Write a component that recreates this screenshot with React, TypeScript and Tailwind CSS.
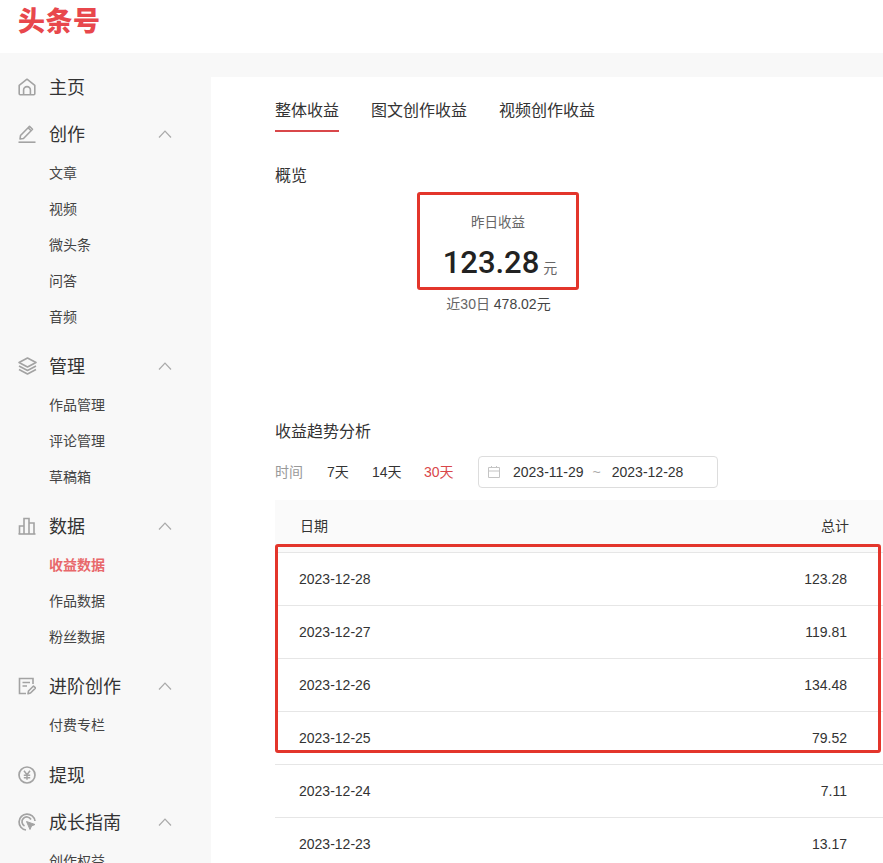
import React from "react";

const cjk = { fontFamily: '"Liberation Sans", "Noto Sans CJK SC", sans-serif' };

const HomeI = () => (
  <svg width="18" height="18" viewBox="0 0 18 18" fill="none" stroke="#a3a3a3" strokeWidth="1.6">
    <path d="M1.2 7.4 9 1.2l7.800 6.200v8.400a1 1 0 0 1-1 1H2.200a1 1 0 0 1-1-1z" strokeLinejoin="round" />
    <path d="M5.600 16.600v-4.600a3.400 3.400 0 0 1 6.800 0v4.600" />
  </svg>
);
const PenI = () => (
  <svg width="18" height="18" viewBox="0 0 18 18" fill="none" stroke="#a3a3a3" strokeWidth="1.6">
    <path d="M2.500 10.500 2 14l3.500-.5 7.600-7.800-3-3zM10.100 2.700 11.500 1.300l3 3-1.400 1.400" strokeLinejoin="round" />
    <path d="M0.500 17.200h17" />
  </svg>
);
const LayersI = () => (
  <svg width="19" height="18" viewBox="0 0 19 18" fill="none" stroke="#a3a3a3" strokeWidth="1.6" strokeLinejoin="round">
    <path d="M9.500 1 18 5.500 9.500 10 1 5.500z" />
    <path d="M1 9l8.500 4.500L18 9" />
    <path d="M1 12.500 9.500 17l8.500-4.500" />
  </svg>
);
const BarsI = () => (
  <svg width="18" height="18" viewBox="0 0 18 18" fill="none" stroke="#a3a3a3" strokeWidth="1.6">
    <path d="M0.500 17h17" />
    <path d="M1.500 17V9h4.500v8M6 17V1.500h5V17M11 17V6h5v11" />
  </svg>
);
const NoteI = () => (
  <svg width="18" height="18" viewBox="0 0 18 18" fill="none" stroke="#a3a3a3" strokeWidth="1.6">
    <path d="M15 7V1.500H1.500v15H8" />
    <path d="M4.500 5.500h7.500M4.500 9h4.500" />
    <path d="m10 16.800.5-2.800 5-5 2 2-5 5z" strokeLinejoin="round" />
  </svg>
);
const YuanI = () => (
  <svg width="18" height="18" viewBox="0 0 18 18" fill="none" stroke="#a3a3a3" strokeWidth="1.5">
    <circle cx="9" cy="9" r="8" strokeWidth="1.700" />
    <path d="M6 4.800l3 4 3-4M5.800 9.200h6.400M5.800 11.800h6.400M9 8.800v5" />
  </svg>
);
const GuideI = () => (
  <svg width="18" height="18" viewBox="0 0 18 18" fill="none" stroke="#a3a3a3" strokeWidth="1.700">
    <path d="M8 17A8 8 0 1 1 17 8" />
    <path d="M6.500 13A4.800 4.800 0 1 1 13 6.500" />
    <path d="m8.500 8.500 8.500 3-3.500 1.500-1.500 3.500z" fill="#a3a3a3" strokeWidth="1" strokeLinejoin="round" />
  </svg>
);
const Chevron = () => (
  <svg width="14" height="8" viewBox="0 0 14 8" fill="none" stroke="#aaaaaa" strokeWidth="1.200">
    <path d="M1 7.500 7 1.200l6 6.300" />
  </svg>
);
const CalI = () => (
  <svg width="12" height="12" viewBox="0 0 12 12" fill="none" stroke="#c4c4c4" strokeWidth="1">
    <path d="M0.500 1.500h11v10h-11zM0.500 5h11M3.500 0v1.500M8.500 0v1.500" />
  </svg>
);

const groups: { label: string; icon: React.ReactNode; subs?: string[]; gap: string }[] = [
  { label: "主页", icon: <HomeI />, gap: "mb-[5px]" },
  { label: "创作", icon: <PenI />, subs: ["文章", "视频", "微头条", "问答", "音频"], gap: "mb-[10px]" },
  { label: "管理", icon: <LayersI />, subs: ["作品管理", "评论管理", "草稿箱"], gap: "mb-[10px]" },
  { label: "数据", icon: <BarsI />, subs: ["收益数据", "作品数据", "粉丝数据"], gap: "mb-[10px]" },
  { label: "进阶创作", icon: <NoteI />, subs: ["付费专栏"], gap: "mb-[11px]" },
  { label: "提现", icon: <YuanI />, gap: "mb-[5px]" },
  { label: "成长指南", icon: <GuideI />, subs: ["创作权益"], gap: "mb-[10px]" },
];

const rows = [
  ["2023-12-28", "123.28"],
  ["2023-12-27", "119.81"],
  ["2023-12-26", "134.48"],
  ["2023-12-25", "79.52"],
  ["2023-12-24", "7.11"],
  ["2023-12-23", "13.17"],
];

export default function App() {
  return (
    <div className="h-[863px] w-[883px] overflow-hidden bg-[#f8f8f8] text-[#222222]" style={cjk}>
      <header className="flex h-[53px] items-start bg-white pl-[18px] pt-[2px]">
        <span className="text-[27px] font-black leading-[40px] tracking-[0.5px] text-[#e8474c]">头条号</span>
      </header>
      <div className="flex h-[810px]">
        <aside className="w-[211px] shrink-0 pt-[13px]">
          {groups.map((g) => (
            <div key={g.label} className={g.gap}>
              <div className="flex h-[42px] items-center pl-[18px] pr-[39px]">
                <span className="flex w-[31px] shrink-0">{g.icon}</span>
                <span className="flex-1 pt-[2px] text-[18px] text-[#333333]">{g.label}</span>
                {g.subs && <Chevron />}
              </div>
              {g.subs?.map((s) => (
                <div
                  key={s}
                  className={
                    s === "收益数据"
                      ? "flex h-9 items-center pl-[49px] text-[14px] font-bold text-[#e8686b]"
                      : "flex h-9 items-center pl-[49px] text-[14px] text-[#444444]"
                  }
                >
                  {s}
                </div>
              ))}
            </div>
          ))}
        </aside>
        <main className="mt-[24px] flex-1 bg-white pl-[64px] pt-[24px]">
          <nav className="flex h-[31px] gap-[32px] text-[16px] text-[#333333]">
            <div className="h-[31px] border-b-2 border-[#d9474a] leading-[19px]">整体收益</div>
            <div className="leading-[19px]">图文创作收益</div>
            <div className="leading-[19px]">视频创作收益</div>
          </nav>
          <h2 className="mt-[32px] text-[16px] leading-[24px] text-[#333333]">概览</h2>
          <div className="ml-[142px] mt-[4px] flex h-[98px] w-[162px] flex-col items-center rounded-[3px] border-[3px] border-[#e3352b] pt-[18px]">
            <div className="text-[13.500px] leading-[20px] text-[#666666]">昨日收益</div>
            <div className="mt-[8px] flex items-baseline gap-[4px] pl-[4px]">
              <span className="text-[31px] font-medium leading-[44px] text-[#222222]" style={{ fontFamily: "Roboto, sans-serif" }}>123.28</span>
              <span className="text-[14px] text-[#666666]">元</span>
            </div>
          </div>
          <div className="ml-[143px] mt-[4px] w-[161px] text-center text-[14px] leading-[20px] text-[#666666]">
            近30日 <span className="text-[#444444]">478.02元</span>
          </div>
          <h2 className="mt-[106px] text-[16px] leading-[24px] text-[#333333]">收益趋势分析</h2>
          <div className="mt-[12px] flex h-[32px] items-center text-[14px]">
            <span className="w-[52px] text-[#999999]">时间</span>
            <span className="w-[45px] text-[#333333]">7天</span>
            <span className="w-[52px] text-[#333333]">14天</span>
            <span className="w-[54px] text-[#d9474a]">30天</span>
            <div className="flex h-[32px] w-[240px] items-center rounded-[4px] border border-[#dddddd] pl-[9px] text-[#333333]">
              <CalI />
              <span className="ml-[13px]">2023-11-29</span>
              <span className="ml-[9px] text-[#aaaaaa]">~</span>
              <span className="ml-[11px]">2023-12-28</span>
            </div>
          </div>
          <div className="relative mt-[12px]">
            <div className="flex h-[52px] items-center justify-between bg-[#fafafa] pl-[25px] pr-[34px] text-[14px] text-[#333333]">
              <span>日期</span>
              <span>总计</span>
            </div>
            {rows.map(([d, v]) => (
              <div key={d} className="flex h-[53px] items-center justify-between border-t border-[#e6e6e6] pl-[24px] pr-[36px] text-[14px] text-[#333333]">
                <span>{d}</span>
                <span>{v}</span>
              </div>
            ))}
            <div className="absolute left-0 top-[44px] h-[209px] w-[606px] rounded-[3px] border-[3px] border-[#e3352b]" />
          </div>
        </main>
      </div>
    </div>
  );
}
